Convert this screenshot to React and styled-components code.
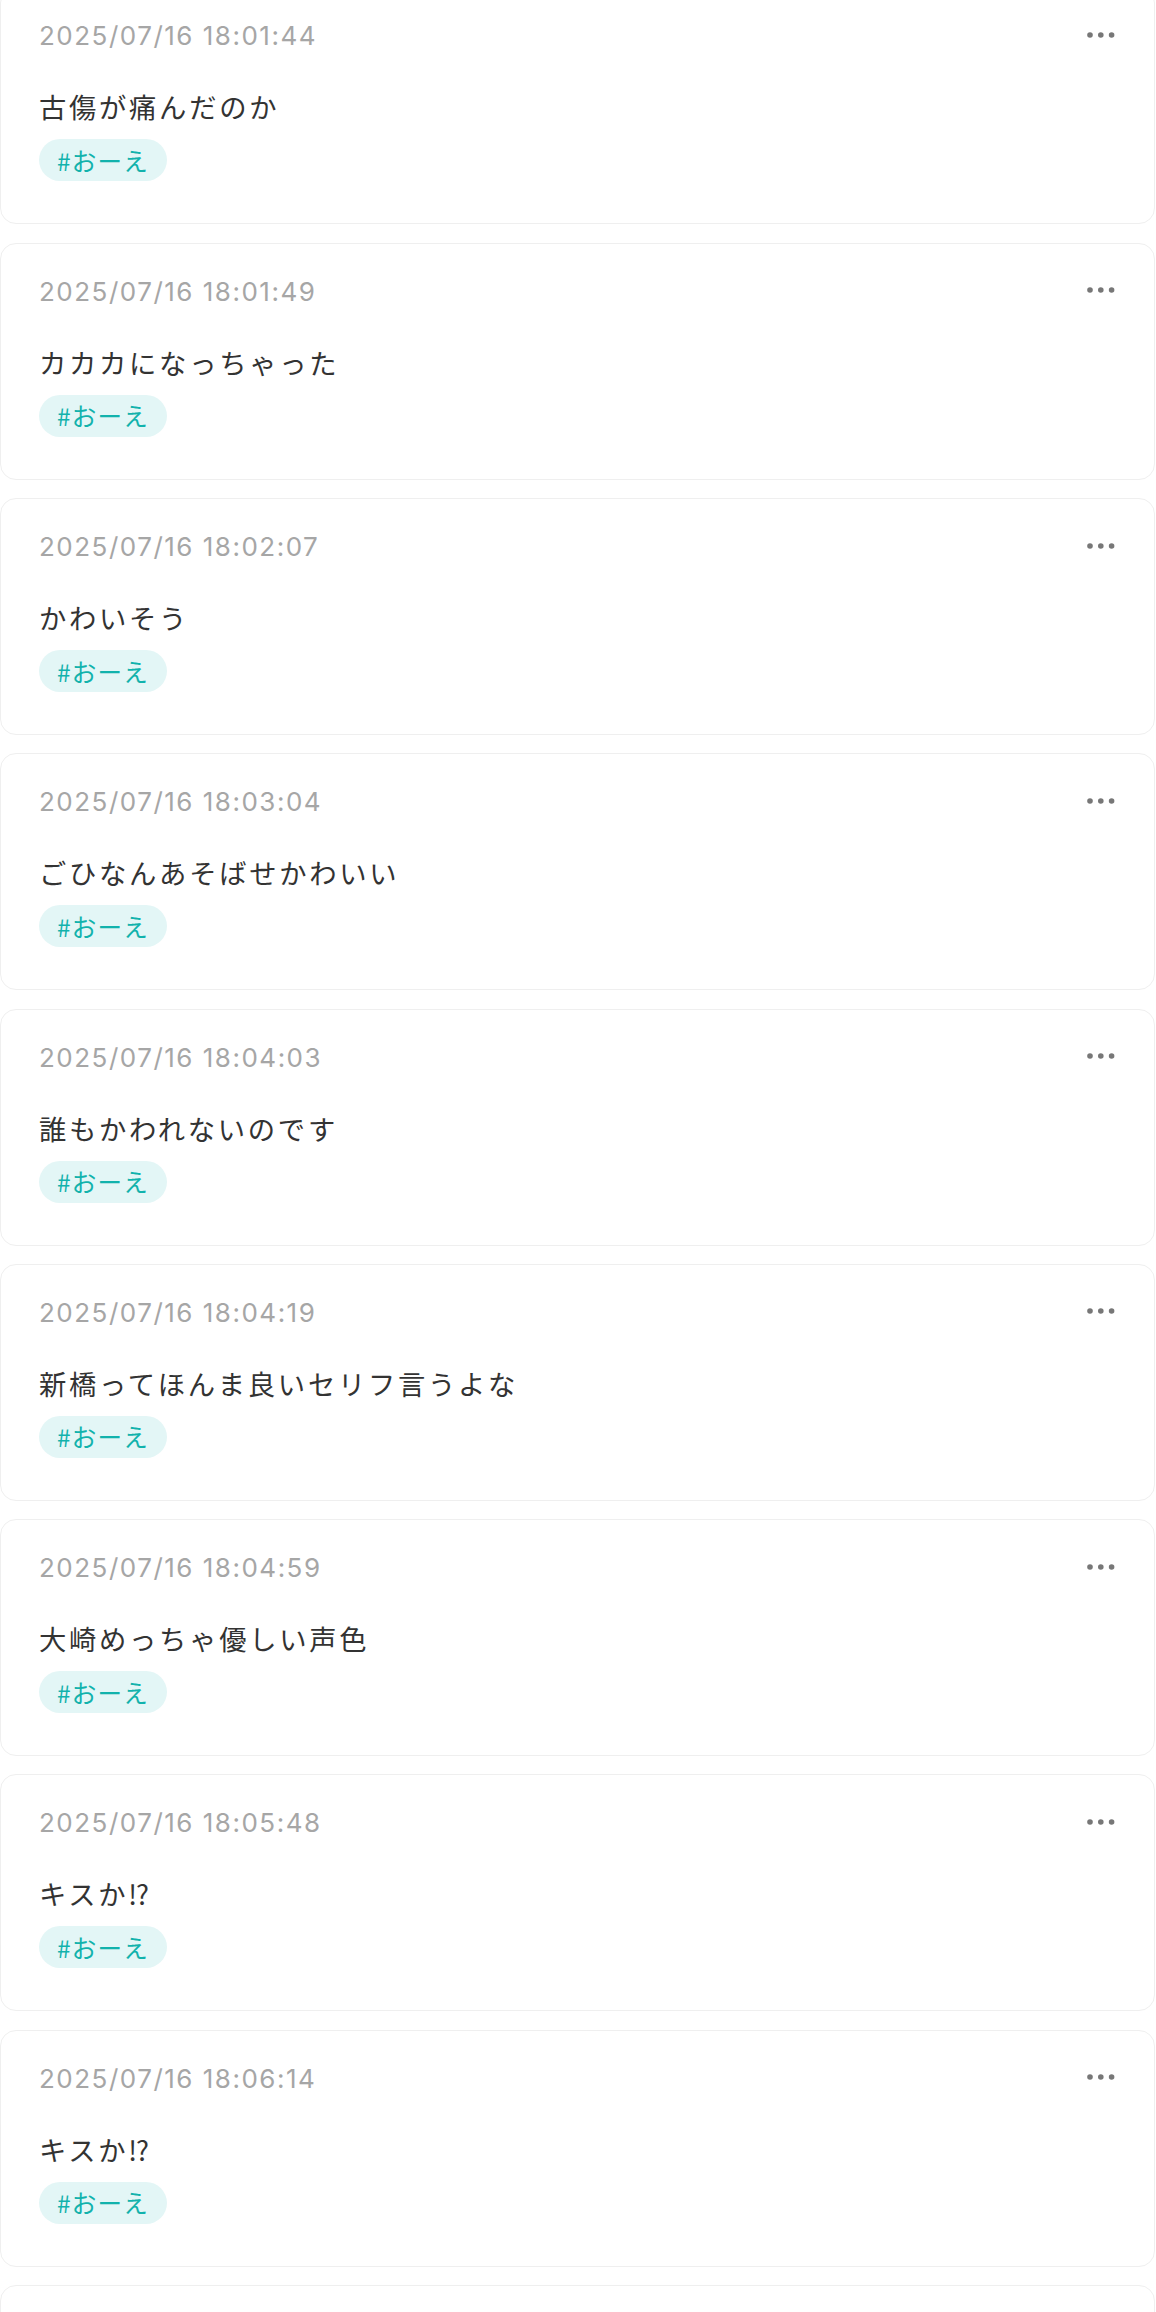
import styled, { createGlobalStyle } from 'styled-components';

const posts = [
	{ id: 1, time: '2025/07/16 18:01:44', text: '古傷が痛んだのか', tag: 'おーえ' },
	{ id: 2, time: '2025/07/16 18:01:49', text: 'カカカになっちゃった', tag: 'おーえ' },
	{ id: 3, time: '2025/07/16 18:02:07', text: 'かわいそう', tag: 'おーえ' },
	{ id: 4, time: '2025/07/16 18:03:04', text: 'ごひなんあそばせかわいい', tag: 'おーえ' },
	{ id: 5, time: '2025/07/16 18:04:03', text: '誰もかわれないのです', tag: 'おーえ' },
	{ id: 6, time: '2025/07/16 18:04:19', text: '新橋ってほんま良いセリフ言うよな', tag: 'おーえ' },
	{ id: 7, time: '2025/07/16 18:04:59', text: '大崎めっちゃ優しい声色', tag: 'おーえ' },
	{ id: 8, time: '2025/07/16 18:05:48', text: 'キスか⁉', tag: 'おーえ' },
	{ id: 9, time: '2025/07/16 18:06:14', text: 'キスか⁉', tag: 'おーえ' },
];

const GlobalStyle = createGlobalStyle`
	html, body {
		margin: 0;
		padding: 0;
		background: #fff;
		overflow: hidden;
	}

	body {
		font-family: 'Noto Sans CJK JP', 'Noto Sans', sans-serif;
		color: #333;
	}
`;

const Feed = styled.div`
	display: flex;
	flex-direction: column;
	gap: 18.3px;
	margin-top: -12.6px;
	padding-right: 1px;
	height: 2325px;
	overflow: hidden;
`;

const Card = styled.article`
	flex-shrink: 0;
	box-sizing: border-box;
	height: 237px;
	padding: 30px 38px 0 38px;
	background: #fff;
	border: 1px solid #efefef;
	border-radius: 16px;
`;

const Header = styled.div`
	display: flex;
	align-items: center;
	justify-content: space-between;
	height: 36px;
`;

const Time = styled.time`
	font-family: Inter, 'Noto Sans', sans-serif;
	font-size: 26px;
	line-height: 36px;
	letter-spacing: 1.5px;
	color: #a6a6a6;
`;

const MoreButton = styled.button`
	display: flex;
	align-items: center;
	padding: 0;
	margin: -3px 1px 0 0;
	border: 0;
	background: none;
	color: #777;
	cursor: pointer;
`;

const Body = styled.p`
	margin: 32px 0 0;
	font-size: 27.3px;
	line-height: 40px;
	letter-spacing: 0.1em;
	color: #333;
`;

const Tag = styled.span`
	display: inline-flex;
	align-items: center;
	box-sizing: border-box;
	height: 42px;
	margin-top: 13px;
	padding: 0 18px;
	border-radius: 21px;
	background: #e3f6f6;
	color: #12b2ac;
	font-size: 24.5px;
	letter-spacing: 0.05em;
`;

const Dots = () => (
	<svg width="28" height="6" viewBox="0 0 28 6" fill="currentColor">
		<circle cx="3" cy="3" r="2.8" />
		<circle cx="13.8" cy="3" r="2.8" />
		<circle cx="24.6" cy="3" r="2.8" />
	</svg>
);

const Post = ({ post: { time, text, tag } }) => (
	<Card>
		<Header>
			<Time>{time}</Time>
			<MoreButton aria-label="menu">
				<Dots />
			</MoreButton>
		</Header>
		<Body>{text}</Body>
		<Tag>#{tag}</Tag>
	</Card>
);

export default function App() {
	return (
		<>
			<GlobalStyle />
			<Feed>
				{posts.map((post) => (
					<Post key={post.id} post={post} />
				))}
				<Card aria-hidden="true" />
			</Feed>
		</>
	);
}
